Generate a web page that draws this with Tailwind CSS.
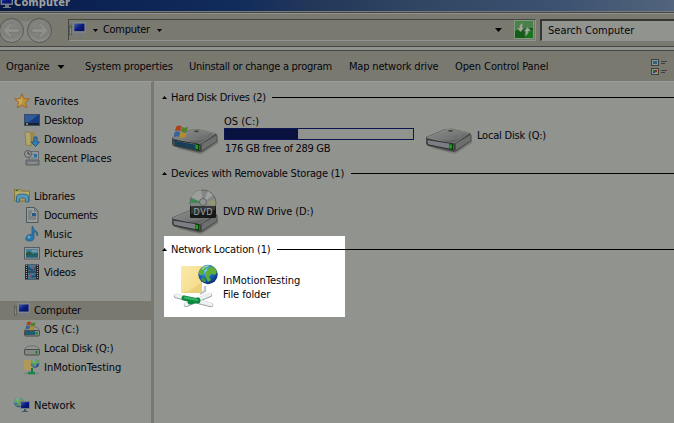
<!DOCTYPE html>
<html lang="en">
<head>
<meta charset="utf-8">
<title>Computer</title>
<script src="https://cdn.jsdelivr.net/npm/@tailwindcss/browser@4"></script>
</head>
<body class="w-[674px] h-[423px] overflow-hidden bg-[#91938e] font-['DejaVu_Sans_Condensed','DejaVu_Sans',sans-serif] [font-stretch:condensed] text-[11px] leading-[14px] text-[#05050d] whitespace-nowrap">
<svg width="0" height="0" class="absolute">
  <defs>
    <linearGradient id="metal" x1="0" y1="0" x2="1" y2="1"><stop stop-color="#8c8e8b"/><stop offset=".55" stop-color="#747775"/><stop offset="1" stop-color="#454846"/></linearGradient>
    <linearGradient id="screen" x1="0" y1="0" x2="1" y2="1"><stop stop-color="#3f5fa4"/><stop offset=".5" stop-color="#0a1a80"/><stop offset="1" stop-color="#06115c"/></linearGradient>
    <linearGradient id="folder" x1="0" y1="0" x2="1" y2="1"><stop stop-color="#fbe9a9"/><stop offset="1" stop-color="#f3da86"/></linearGradient>
    <radialGradient id="globe" cx=".4" cy=".3" r=".75"><stop stop-color="#7fd0f6"/><stop offset=".45" stop-color="#1c70c9"/><stop offset="1" stop-color="#08246c"/></radialGradient>
    <radialGradient id="round" cx=".5" cy=".35" r=".65"><stop stop-color="#858681"/><stop offset=".7" stop-color="#7f807b"/><stop offset="1" stop-color="#939590"/></radialGradient>
    <symbol id="pc" viewBox="0 0 16 16"><rect x=".5" y="4" width="2" height="9" fill="#858b85" stroke="#4d5751" stroke-width=".7"/><path d="M1 6h1" stroke="#2a6b35"/><rect x="4" y="1.500" width="11.500" height="9" fill="#767d85" stroke="#858b92" stroke-width=".8"/><rect x="5" y="2.500" width="9.500" height="7" fill="url(#screen)"/><path d="M8 11h4v2h2v1H6v-1h2z" fill="#717a83"/></symbol>
    <symbol id="flag" viewBox="0 0 18 16"><path d="M3 2Q6-.3 9 1.500L7.500 7Q5 5.500 1.500 7z" fill="#aa421b"/><path d="M9.500 2Q13 4 16.500 2L15 7.500Q11.500 9 8.300 7.200z" fill="#51812f"/><path d="M1.200 8Q5 6.500 7.300 8L6 13.500Q3 12 0 13.500z" fill="#33649a"/><path d="M8 8.200Q11 10 14.700 8.500L13 14Q9.500 15.500 6.600 13.800z" fill="#b58d2b"/></symbol>
    <symbol id="drive" viewBox="0 0 48 26"><path d="M6 20L30 26 47 15V12z" fill="#50524f" opacity=".35"/><path d="M1 9L19 1.500Q22 .5 27 .8L44 4.500Q46.500 5.500 46.500 8V13L32 23Q29 24.500 26 23.500L3 18Q1 17 1 15z" fill="#4b4e4c"/><path d="M2 9.500L20 2Q23 1 27 1.500L44 5 31 14Q27 15.500 23 15z" fill="url(#metal)" stroke="#979996" stroke-width=".6"/><path d="M31 15.500L45.500 7V12.500L31 22z" fill="#6c6f6d"/><path d="M2 11.500L27 15.500Q29 16 29 18V22L4 17Q2 16.500 2 14z" fill="#7b7f85" stroke="#2f3231"/><path d="M24.500 15.500h3.500v6.500l-3.500-1z" fill="#063b08"/><path d="M25 16.500h2v4h-2z" fill="#23a023"/><ellipse cx="25" cy="7.500" rx="11" ry="3.500" fill="none" stroke="#7d807d" stroke-width=".7"/><ellipse cx="25.500" cy="2.800" rx="2.500" ry=".9" fill="#3c3f3c"/></symbol>
    <symbol id="minidrive" viewBox="0 0 16 16"><path d="M3 5.500Q4 5 5 5h7q1 0 1.500.7L16 9H0z" fill="#929590" stroke="#636764" stroke-width=".8"/><rect x=".5" y="8.500" width="15" height="5.500" rx="1.200" fill="#858985" stroke="#464c4b"/><rect x="11.500" y="10" width="2" height="2.500" fill="#16801c"/></symbol>
    <symbol id="earth" viewBox="0 0 20 20"><circle cx="10" cy="10" r="9.700" fill="url(#globe)"/><path d="M3 4Q6 .8 9 1L8 4 6 6 6 9 3 11 .6 9Q1 6 3 4zM10 4l3-2.500 4 2 2 4-2 3-4-1-2 3 2 3-3 2-2-4-1-4z" fill="#5fae35"/><path d="M4 13l3 1 1 3-2 1-3-3z" fill="#3f9442"/><path d="M4 5Q7 1 11 1.500" stroke="#d7f4fa" stroke-width="1.200" fill="none" opacity=".6"/></symbol>
    <symbol id="down" viewBox="0 0 7 4"><path d="M0 0h7L3.500 4z" fill="#020204"/></symbol>
  </defs>
</svg>

<header>
  <div class="relative h-[11px] overflow-hidden bg-[linear-gradient(90deg,#071841_0px,#0a2152_80px,#122c5c_240px,#233759_310px,#304663_420px,#3c5270_560px,#53657d_674px)]">
    <svg class="absolute left-0 -top-[6px]" width="13" height="16" viewBox="3 0 13 16"><use href="#pc" width="16" height="16"/></svg>
    <div class="absolute left-[14px] -top-[4px] font-bold text-[11px] tracking-[0.15px] text-[#a0a29f]">Computer</div>
  </div>
  <div class="h-[2px] border-t border-[#787a79] bg-[#454646]"></div>
  <div class="h-[33px] flex items-start bg-[#7a7970] border-t border-[#91938e]">
    <div class="relative w-[68px] h-[32px] shrink-0">
      <svg width="56" height="32" viewBox="0 0 56 32">
        <path d="M12 5Q26 10 39 5V28Q26 25 12 28z" fill="#858681"/>
        <circle cx="11.500" cy="16.500" r="12" fill="url(#round)" stroke="#555755"/>
        <circle cx="39.500" cy="16.500" r="12" fill="url(#round)" stroke="#555755"/>
        <path d="M3 16.500l7-7h3l-4 5h10v4H9l4 5h-3z" fill="#8e908b" stroke="#777974" stroke-width=".8"/>
        <path d="M48 16.500l-7-7h-3l4 5H32v4h10l-4 5h3z" fill="#8e908b" stroke="#777974" stroke-width=".8"/>
      </svg>
    </div>
    <div class="mt-[5px] w-[468px] h-[22px] shrink-0 flex items-center border border-t-[#444542] border-l-[#444542] border-b-[#91938e] border-r-[#91938e]">
      <svg width="17" height="17" class="shrink-0 -mt-px"><use href="#pc"/></svg>
      <svg width="5" height="3" class="ml-[7px]"><use href="#down" width="5" height="3"/></svg>
      <span class="ml-[5px] w-[47px] tracking-[-0.3px]">Computer</span>
      <svg width="5" height="3" class="ml-[7px]"><use href="#down" width="5" height="3"/></svg>
      <svg width="7" height="4" class="ml-auto"><use href="#down"/></svg>
      <svg width="20" height="19" viewBox="0 0 20 19" class="ml-[12px] -mt-px mr-px"><rect x=".5" y=".5" width="19" height="18" fill="#155c18" stroke="#7e9b7b"/><path d="M1 1h18v7Q9 7 1 11z" fill="#48824a"/><rect x="11" y="10" width="8" height="8" fill="#188118" opacity=".7"/><path d="M3 8h2.500Q5 4 9 3q-1 2-.5 5H10L6.500 12zM10 11l3.500-4 3.500 4h-2.500q0 4-4 5 1.500-2 1-5z" fill="#a0a89c" stroke="#66795e" stroke-width=".5"/></svg>
    </div>
    <div class="mt-[5px] ml-[4px] flex-1 h-[22px] border-2 border-r-0 border-b border-t-[#353632] border-l-[#353632] border-b-[#91938e] bg-[#91938e] pl-[6px] leading-[20px]">Search Computer</div>
  </div>
  <div class="h-[5px] bg-[#91938e] border-t border-b border-t-[#464744] border-b-[#464744]"></div>
  <nav class="h-[30px] flex items-center bg-[#7a7970] pl-[6px] pr-[7px] pt-px">
    <span class="w-[51px] tracking-[-0.1px]">Organize</span>
    <svg width="8" height="4"><use href="#down" width="8" height="4"/></svg>
    <span class="ml-[20px] w-[104px] tracking-[-0.17px]">System properties</span>
    <span class="w-[160px] tracking-[-0.26px]">Uninstall or change a program</span>
    <span class="w-[106px] tracking-[-0.17px]">Map network drive</span>
    <span class="tracking-[-0.1px]">Open Control Panel</span>
    <svg class="ml-auto" width="16" height="16" viewBox="0 0 16 16" shape-rendering="crispEdges"><rect x=".5" y=".5" width="7" height="6" fill="#92948f" stroke="#3c4141"/><rect x="2" y="2" width="4" height="3" fill="#246581"/><rect x=".5" y="9.500" width="7" height="6" fill="#92948f" stroke="#3c4141"/><path d="M2 11h2v2H2z" fill="#236b2f"/><path d="M4 11h2v2H4z" fill="#8a2926"/><path d="M2 13h2v1H2z" fill="#2838a0"/><path d="M4 13h2v1H4z" fill="#9b8922"/><path d="M10 2.500h6M10 4.500h4M10 11.500h6M10 13.500h4" stroke="#40413f"/></svg>
  </nav>
</header>

<div class="flex h-[342px]">
  <aside class="w-[154px] shrink-0 border-t border-[#9a9c97] border-r-[3px] border-r-[#7a7970] bg-[#91938e] pt-[10px] [&>div]:h-[19px] [&>div]:flex [&>div]:items-center [&>div]:pl-[14px] [&>div]:gap-[4px] [&>.sub]:pl-[24px] [&_svg]:shrink-0 [&_svg]:-mt-[2px]">
    <div><svg width="16" height="16" viewBox="0 0 16 16"><path d="M8 .7l2 5 5.500.3-4.200 3.500 1.500 5.500L8 12l-4.800 3 1.500-5.500L.5 6 6 5.700z" fill="#bc963d" stroke="#a36424"/><path d="M8 3v6l-2 3-2 1 1.500-4L3 7l4-1z" fill="#c9b36a" opacity=".7"/></svg>Favorites</div>
    <div class="sub tracking-[-0.2px]"><svg width="16" height="16" viewBox="0 0 16 16"><rect x=".5" y="2.500" width="15" height="11" fill="#173b7c" stroke="#394d67"/><path d="M1 3h13L5 10H1z" fill="#3b65a5" opacity=".75"/><path d="M1 12h14" stroke="#17212c" stroke-width="2"/><circle cx="3" cy="12" r="1" fill="#b2a64a"/></svg>Desktop</div>
    <div class="sub tracking-[-0.2px]"><svg width="16" height="16" viewBox="0 0 16 16"><path d="M1 1h8l2 1v12H1z" fill="#9a8a50"/><path d="M1 1h4l2 2v12l-5-1z" fill="#b3a56b" stroke="#81713a" stroke-width=".6"/><path d="M10 6h3v5h2.500l-4 4.500L7 11h3z" fill="#347faf" stroke="#225a83"/></svg>Downloads</div>
    <div class="sub tracking-[-0.1px]"><svg width="16" height="16" viewBox="0 0 16 16"><rect x="5.500" y="1.500" width="9" height="10" fill="#91999d" stroke="#656d72"/><path d="M7 4h3M7 8h6" stroke="#5b7995"/><path d="M10 4h3v3h-3z" fill="#296b9b"/><path d="M2 10h13v5H2z" fill="#757b7e" stroke="#5c6265"/><path d="M4 13h9" stroke="#9a9e9e"/><circle cx="4" cy="4" r="3.500" fill="#959792" stroke="#555a5b"/><path d="M4 1.800V4h2" stroke="#30393d" fill="none"/></svg>Recent Places</div>
    <div></div>
    <div class="tracking-[-0.2px]"><svg width="16" height="16" viewBox="0 0 16 16"><path d="M.5 3V1.500h6L8 3h7.500v10h-15z" fill="#aa9d61" stroke="#857536"/><path d="M2 2.500h2" stroke="#27752d"/><path d="M1 5h14" stroke="#c2b77b"/><path d="M2.500 14V9q0-3 6-3t6 3v5h-3v-3q0-1-3-1t-3 1v3z" fill="#5798b7" stroke="#346b8b"/></svg>Libraries</div>
    <div class="sub tracking-[-0.3px]"><svg width="16" height="16" viewBox="0 0 16 16"><path d="M2.500.5h8l3.500 3.500v11.500H2.500z" fill="#9a9c99" stroke="#50575c"/><path d="M10.500.5V4H14M4 4h4M4 6h4M4 8h3M4 10h8M4 12h8" stroke="#606c76" fill="none"/><path d="M8 6h4v3H8z" fill="#285887"/></svg>Documents</div>
    <div class="sub"><svg width="16" height="16" viewBox="0 0 16 16"><path d="M9 .5q0 3 3 4.500 3 2 1 5 .5-4-3-4.500V12q0 3-4.500 3T2 12q0-3 4-3.500 1-.2 2 .3V.5z" fill="#2876ab" stroke="#245982" stroke-width=".7"/><circle cx="5" cy="11" r="1.500" fill="#6aa5c4"/></svg>Music</div>
    <div class="sub"><svg width="16" height="16" viewBox="0 0 16 16"><rect x=".5" y="2.500" width="15" height="11.500" fill="#94999b" stroke="#545b5f"/><rect x="2" y="4" width="12" height="8.500" fill="#478099"/><path d="M2 8l3-2 4 3 5-1v3H2z" fill="#225a46"/><path d="M2 10h12v2.500H2z" fill="#235e77"/><path d="M8 6h5" stroke="#a0b7b8"/></svg>Pictures</div>
    <div class="sub tracking-[-0.2px]"><svg width="16" height="16" viewBox="0 0 16 16"><rect x="1" y=".5" width="14" height="15" fill="#202429"/><rect x="4" y="1" width="8" height="6.500" fill="#42779b"/><rect x="4" y="8.500" width="8" height="6.500" fill="#3c7397"/><path d="M4 2l4 3 4-3v4l-4 1-4-1zM5 10l4 2 3-2v3l-4 1z" fill="#24516e"/><path d="M8 2l3 2-2 2zM6 10l2 2-2 1z" fill="#a25550"/><path d="M2.500 1v14M13.500 1v14" stroke="#9b9d99" stroke-width="1.200" stroke-dasharray="1 1"/></svg>Videos</div>
    <div></div>
    <div class="bg-[#7a7970] tracking-[-0.3px]"><svg width="16" height="16"><use href="#pc"/></svg>Computer</div>
    <div class="sub"><svg width="16" height="16" viewBox="0 0 16 16"><use href="#minidrive" y="1" width="16" height="16"/><rect x="1" y="10" width="10" height="4" fill="#235b70"/><use href="#flag" x="1" width="12" height="10"/></svg>OS (C:)</div>
    <div class="sub tracking-[-0.17px]"><svg width="16" height="16"><use href="#minidrive" y="1" width="16" height="16"/></svg>Local Disk (Q:)</div>
    <div class="sub"><svg width="16" height="16" viewBox="0 0 16 16"><rect y="1" width="8" height="10" fill="#b19a58"/><use href="#earth" x="6.500" width="9" height="9" opacity=".75"/><path d="M8 9v5" stroke="#237348" stroke-width="2"/><path d="M0 14.500h15" stroke="#7f8680" stroke-width="2"/><path d="M4 14h7" stroke="#21824c" stroke-width="2.500"/></svg>InMotionTesting</div>
    <div></div>
    <div><svg width="16" height="16" viewBox="0 0 16 16"><use href="#earth" width="10" height="11" opacity=".75"/><rect x="6" y="4" width="10" height="8" fill="#6f7e8d"/><rect x="7" y="5" width="8" height="6" fill="url(#screen)"/><path d="M10 12h2v2h2v1H8v-1h2z" fill="#485665"/></svg>Network</div>
  </aside>

  <main class="flex-1 min-w-0 border-t border-[#9a9c97] bg-[#91938e] pt-[8px] [&>section]:h-[76px] [&>section]:pl-[8px] [&_h2]:flex [&_h2]:items-center [&_h2]:h-[16px] [&_h2>i]:h-px [&_h2>i]:flex-1 [&_h2>i]:bg-black [&_h2>i]:-mt-[2px] [&_h2>svg]:-mt-[1px]">
    <section>
      <h2><svg width="5" height="3" class="mr-[4px]"><path d="M0 3L2.500 0 5 3z"/></svg><span class="w-[101px] tracking-[-0.25px]">Hard Disk Drives (2)</span><i></i></h2>
      <div class="flex pt-[8px] pl-[9px]">
        <svg class="mt-[8px] shrink-0" width="48" height="36" viewBox="0 0 48 36"><use href="#drive" y="6" width="48" height="27"/><path d="M2.500 18.500l21.500 4v5L4 23.500z" fill="#193e56"/><use href="#flag" x="2" y="3" width="17" height="14"/></svg>
        <div class="w-[191px] ml-[4px]">
          <div class="leading-[13px] mt-px pl-px">OS (C:)</div>
          <div class="h-[12px] ml-px border border-[#0a1750]"><div class="w-[73px] h-full bg-[#09123f]"></div></div>
          <div class="leading-[14px] ml-[2px] mt-[2px] tracking-[-0.3px]">176 GB free of 289 GB</div>
        </div>
        <svg class="ml-[11px] mt-[14px] shrink-0" width="48" height="26"><use href="#drive"/></svg>
        <div class="mt-[15px] ml-[4px] tracking-[-0.2px]">Local Disk (Q:)</div>
      </div>
    </section>
    <section>
      <h2><svg width="5" height="3" class="mr-[4px]"><path d="M0 3L2.500 0 5 3z"/></svg><span class="w-[180px] tracking-[-0.22px]">Devices with Removable Storage (1)</span><i></i></h2>
      <div class="flex pl-[9px] pt-[7px]">
        <svg width="48" height="48" viewBox="0 0 48 48"><use href="#drive" y="19" width="48" height="27"/><circle cx="32" cy="14" r="13" fill="#828684" stroke="#5e6260"/><path d="M32 14L20 8q4-6 10-7z" fill="#9c9f9d"/><path d="M32 14l-12-5-1 5z" fill="#428751"/><path d="M32 14l12 3q1-4 0-7z" fill="#929476"/><path d="M32 14l5-12 5 4z" fill="#a0a29f"/><circle cx="32" cy="13" r="3.500" fill="#919490" stroke="#606462"/><rect x="19" y="17" width="26" height="12" rx="1" fill="#171918"/><path d="M20 17h24v4q-12 2-24 4z" fill="#343736"/><text x="32" y="26" text-anchor="middle" font-size="9" textLength="19" fill="#a2a4a1">DVD</text></svg>
        <div class="mt-[16px] ml-[4px] tracking-[-0.12px]">DVD RW Drive (D:)</div>
      </div>
    </section>
    <section>
      <div class="relative">
        <div class="absolute left-[2px] -top-[6px] w-[181px] h-[81px] bg-white"></div>
        <div class="relative">
          <h2><svg width="5" height="3" class="mr-[4px]"><path d="M0 3L2.500 0 5 3z"/></svg><span class="w-[106px] tracking-[-0.2px]">Network Location (1)</span><i></i></h2>
          <div class="flex pl-[9px] pt-[6px]">
            <svg width="48" height="48" viewBox="0 0 48 48"><path d="M10 2h21v27H10z" fill="url(#folder)"/><path d="M10 29l8-2 13-9v11z" fill="#e4c96f" opacity=".6"/><use href="#earth" x="27" y="0" width="20" height="21"/><path d="M34 22v5l-5 3" stroke="#c3c9ca" stroke-width="2.500" fill="none"/><path d="M5 32l35 9M15 41l24-10" stroke="#9da5a8" stroke-width="4.500" stroke-linecap="round"/><path d="M5 31.500l35 9M15 40.500l24-10" stroke="#eff1f1" stroke-width="3.400" stroke-linecap="round"/><path d="M13 34l14 3M19 38l8-2" stroke="#0c8a40" stroke-width="5" stroke-linecap="round"/><path d="M14 33.500l12 2.500" stroke="#37b768" stroke-width="2" stroke-linecap="round"/></svg>
            <div class="mt-[10px] ml-[4px]"><div>InMotionTesting</div><div class="tracking-[-0.1px]">File folder</div></div>
          </div>
        </div>
      </div>
    </section>
  </main>
</div>
</body>
</html>
